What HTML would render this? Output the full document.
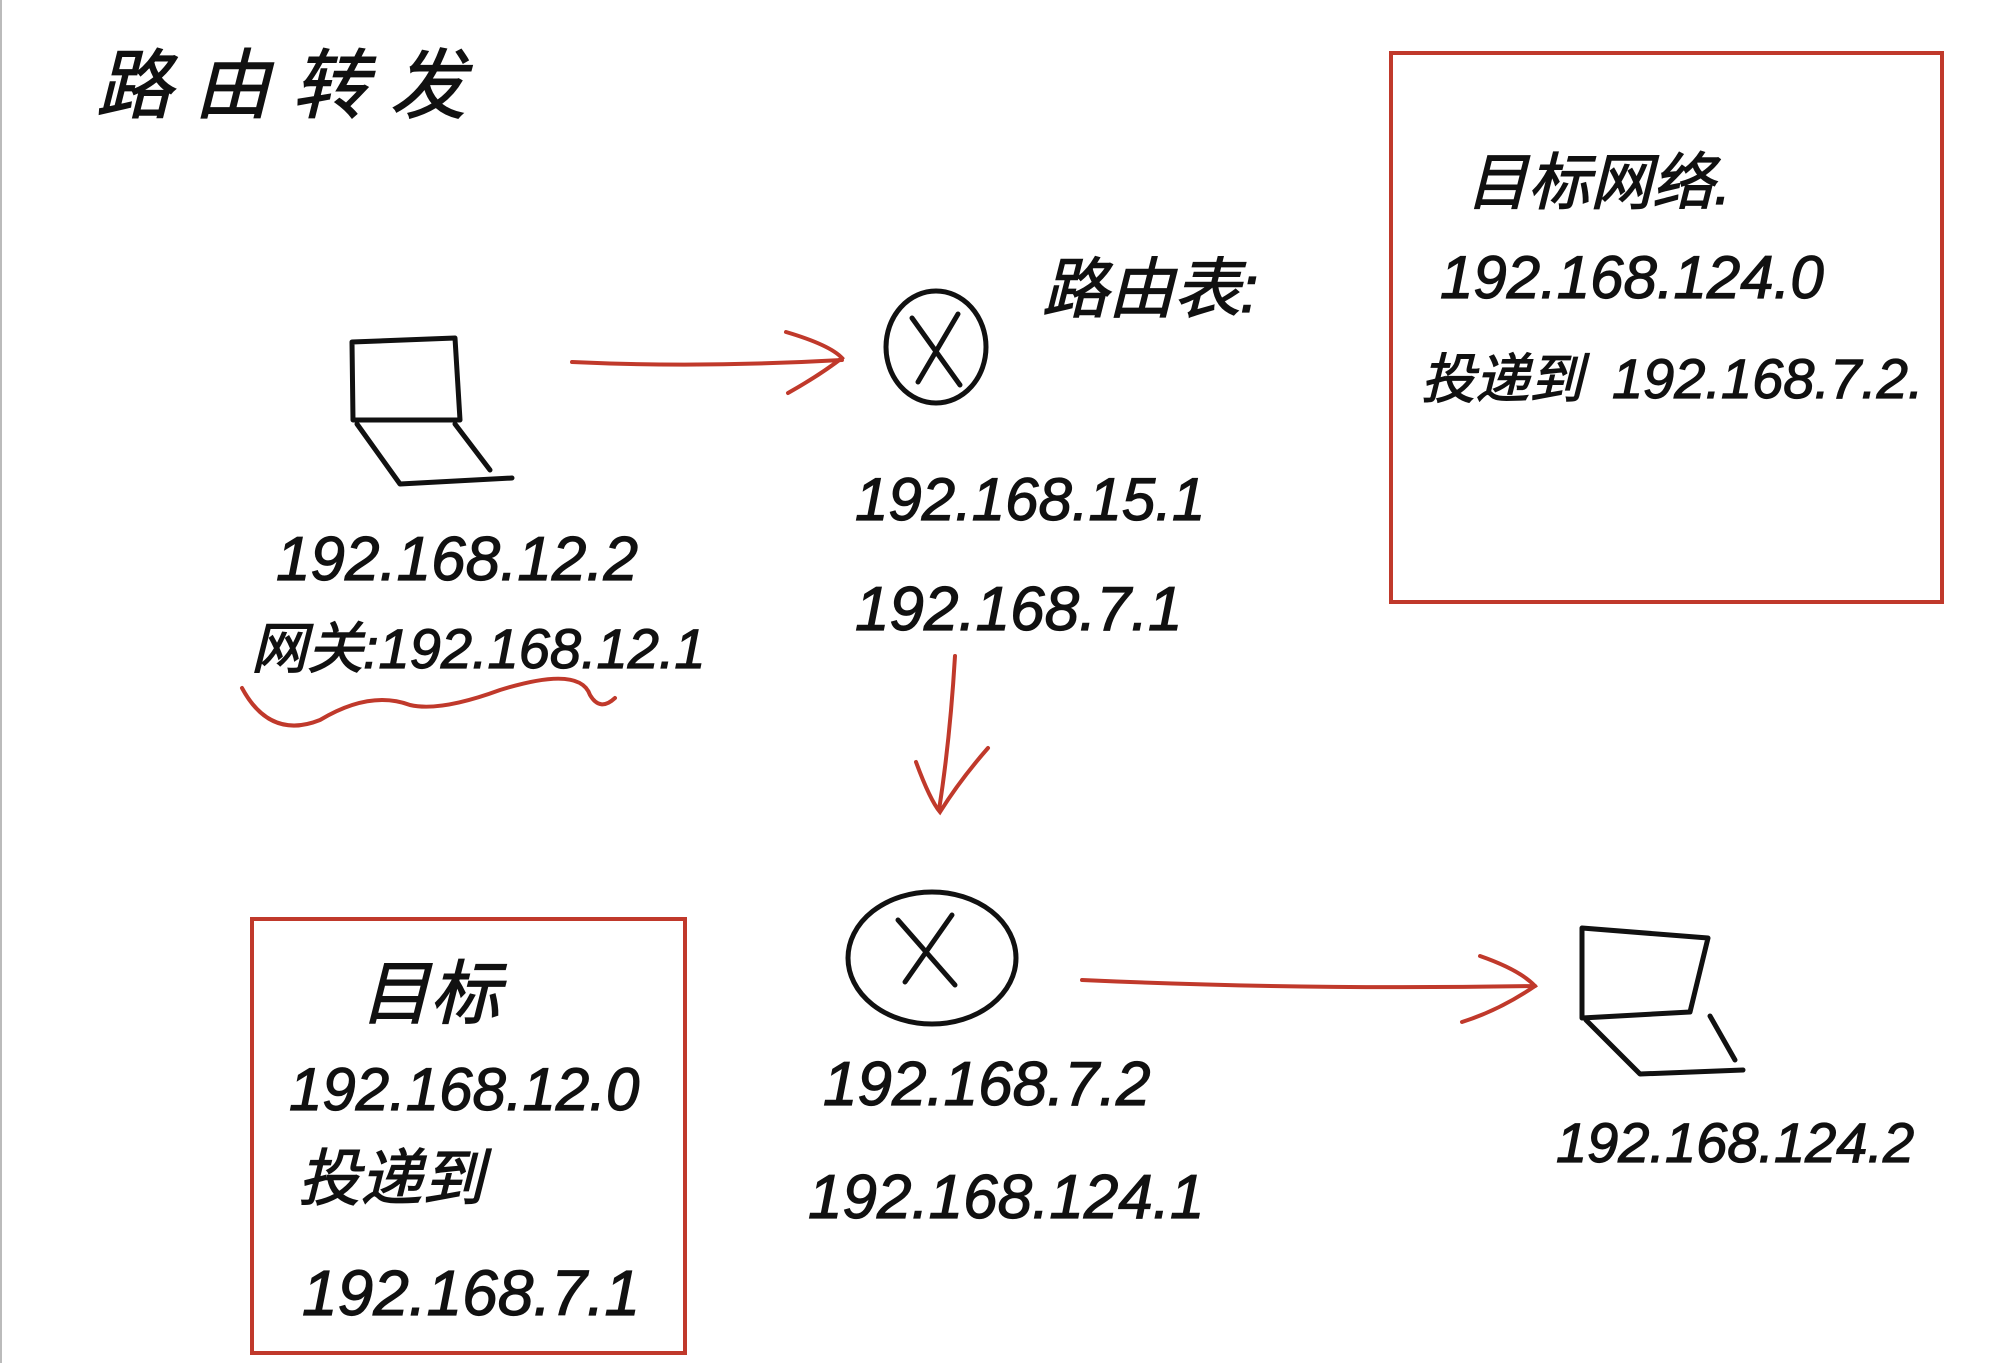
<!DOCTYPE html>
<html><head><meta charset="utf-8"><style>
html,body{margin:0;padding:0;background:#fff;width:2006px;height:1363px;overflow:hidden}
svg{display:block}
text{font-family:"Liberation Sans","Noto Sans CJK SC",sans-serif;fill:#111;font-style:italic;stroke:#111;stroke-width:1.2}
</style></head><body>
<svg width="2006" height="1363" viewBox="0 0 2006 1363">
<line x1="1" y1="0" x2="1" y2="1363" stroke="#bbb" stroke-width="2"/>
<g fill="none" stroke="#c0392b" stroke-width="4" stroke-linecap="round">
<rect x="1391" y="53" width="551" height="549"/>
<rect x="252" y="919" width="433" height="434"/>
<path d="M572 362 Q700 368 842 360"/>
<path d="M786 332 Q830 345 842 358 Q820 375 788 393"/>
<path d="M955 656 Q950 740 939 810"/>
<path d="M916 762 Q930 800 940 812 Q960 780 988 748"/>
<path d="M1082 980 Q1300 990 1535 986"/>
<path d="M1480 956 Q1520 970 1535 986 Q1500 1010 1462 1022"/>
<path d="M242 688 Q270 740 320 720 Q370 690 410 705 Q440 712 500 690 Q580 665 590 695 Q600 712 615 698"/>
</g>
<g fill="none" stroke="#111" stroke-width="5" stroke-linecap="round" stroke-linejoin="round">
<path d="M352 342 L455 338 L460 420 L353 420 Z"/>
<path d="M357 424 L400 484 L512 478 M455 424 L490 470"/>
<ellipse cx="936" cy="347" rx="50" ry="56"/>
<path d="M912 318 L960 385 M958 314 L918 382"/>
<ellipse cx="932" cy="958" rx="84" ry="66"/>
<path d="M898 920 L955 985 M952 915 L905 982"/>
<path d="M1582 928 L1708 938 L1690 1012 L1582 1018 Z"/>
<path d="M1586 1020 L1640 1074 L1743 1070 M1710 1016 L1735 1060"/>
</g>
<text x="96" y="112" font-size="76" letter-spacing="22">路由转发</text>
<text x="1466" y="204" font-size="62">目标网络.</text>
<text x="1440" y="298" font-size="60">192.168.124.0</text>
<text x="1421" y="398" font-size="54">投递到</text>
<text x="1612" y="398" font-size="56">192.168.7.2.</text>
<text x="276" y="580" font-size="62">192.168.12.2</text>
<text x="251" y="668" font-size="56">网关:192.168.12.1</text>
<text x="1042" y="312" font-size="66">路由表:</text>
<text x="855" y="520" font-size="60">192.168.15.1</text>
<text x="855" y="630" font-size="62">192.168.7.1</text>
<text x="823" y="1105" font-size="62">192.168.7.2</text>
<text x="808" y="1218" font-size="62">192.168.124.1</text>
<text x="1556" y="1162" font-size="56">192.168.124.2</text>
<text x="360" y="1018" font-size="70">目标</text>
<text x="289" y="1110" font-size="60">192.168.12.0</text>
<text x="298" y="1200" font-size="62">投递到</text>
<text x="302" y="1315" font-size="64">192.168.7.1</text>
</svg>
</body></html>
